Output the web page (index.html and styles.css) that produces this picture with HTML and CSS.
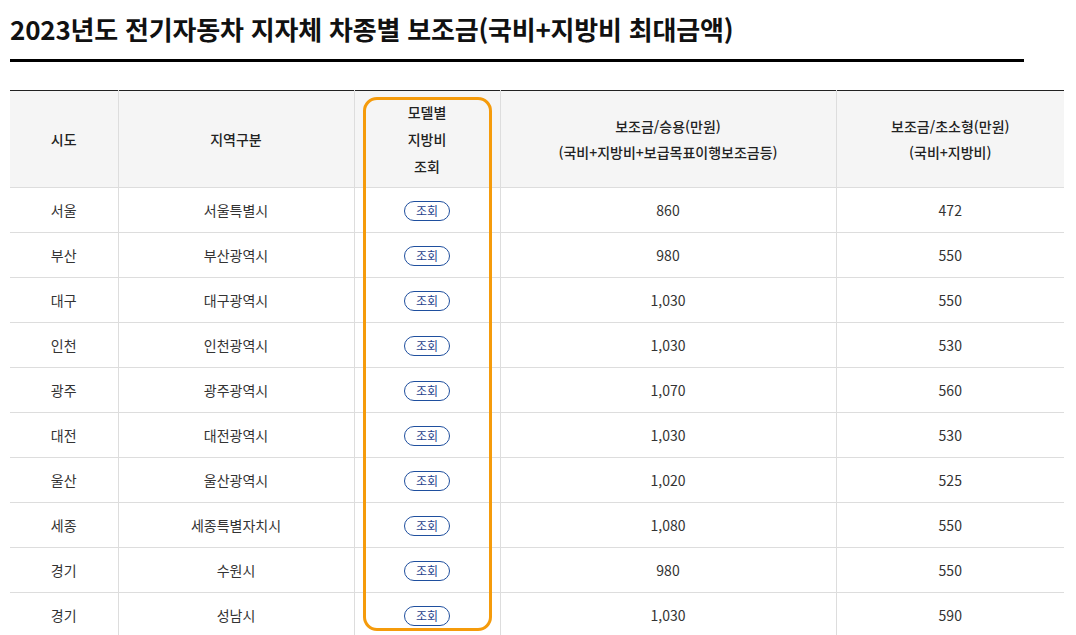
FILE: index.html
```html
<!DOCTYPE html>
<html lang="ko">
<head>
<meta charset="utf-8">
<link rel="stylesheet" href="styles.css">
</head>
<body>
<div class="page">
  <h1 class="title">2023년도 전기자동차 지자체 차종별 보조금(국비+지방비 최대금액)</h1>
  <div class="table-wrap">
    <table class="subsidy">
      <colgroup>
        <col class="c1"><col class="c2"><col class="c3"><col class="c4"><col class="c5">
      </colgroup>
      <thead>
        <tr>
          <th>시도</th>
          <th>지역구분</th>
          <th class="tall">모델별<br>지방비<br>조회</th>
          <th>보조금/승용(만원)<br>(국비+지방비+보급목표이행보조금등)</th>
          <th>보조금/초소형(만원)<br>(국비+지방비)</th>
        </tr>
      </thead>
      <tbody>
        <tr><td>서울</td><td>서울특별시</td><td><span class="btn">조회</span></td><td>860</td><td>472</td></tr>
        <tr><td>부산</td><td>부산광역시</td><td><span class="btn">조회</span></td><td>980</td><td>550</td></tr>
        <tr><td>대구</td><td>대구광역시</td><td><span class="btn">조회</span></td><td>1,030</td><td>550</td></tr>
        <tr><td>인천</td><td>인천광역시</td><td><span class="btn">조회</span></td><td>1,030</td><td>530</td></tr>
        <tr><td>광주</td><td>광주광역시</td><td><span class="btn">조회</span></td><td>1,070</td><td>560</td></tr>
        <tr><td>대전</td><td>대전광역시</td><td><span class="btn">조회</span></td><td>1,030</td><td>530</td></tr>
        <tr><td>울산</td><td>울산광역시</td><td><span class="btn">조회</span></td><td>1,020</td><td>525</td></tr>
        <tr><td>세종</td><td>세종특별자치시</td><td><span class="btn">조회</span></td><td>1,080</td><td>550</td></tr>
        <tr><td>경기</td><td>수원시</td><td><span class="btn">조회</span></td><td>980</td><td>550</td></tr>
        <tr><td>경기</td><td>성남시</td><td><span class="btn">조회</span></td><td>1,030</td><td>590</td></tr>
      </tbody>
    </table>
    <div class="highlight"></div>
  </div>
</div>
</body>
</html>
```

FILE: styles.css
```css
html, body {
  margin: 0;
  padding: 0;
  background: #fff;
}
body {
  font-family: "Noto Sans CJK KR", "Noto Sans", sans-serif;
  color: #333;
  overflow: hidden;
}
.page {
  padding: 0 12px 0 10px;
}
.title {
  margin: 0;
  padding-top: 9px;
  width: 1014px;
  height: 50px;
  font-size: 26px;
  line-height: 40px;
  font-weight: 700;
  color: #111;
  letter-spacing: -0.2px;
  border-bottom: 3px solid #000;
  box-sizing: content-box;
}
.table-wrap {
  position: relative;
  margin-top: 28px;
  width: 1054px;
}
.subsidy {
  width: 1054px;
  border-collapse: collapse;
  table-layout: fixed;
  border-top: 1px solid #222;
  font-size: 14px;
}
.c1 { width: 108px; }
.c2 { width: 236px; }
.c3 { width: 146px; }
.c4 { width: 336px; }
.c5 { width: 228px; }
.subsidy th,
.subsidy td {
  border: 1px solid #ddd;
  text-align: center;
  vertical-align: middle;
  padding: 0;
}
.subsidy th:first-child,
.subsidy td:first-child { border-left: none; }
.subsidy th:last-child,
.subsidy td:last-child { border-right: none; }
.subsidy thead th {
  border-top: none;
  background: #f5f5f5;
  height: 96px;
  font-weight: 500;
  color: #222;
  line-height: 26px;
}
.subsidy thead th.tall {
  line-height: 27px;
}
.subsidy tbody td {
  height: 44px;
  color: #333;
}
.btn {
  display: inline-block;
  width: 44px;
  height: 18px;
  line-height: 17px;
  border: 1px solid #1f4f9e;
  border-radius: 10px;
  font-size: 12px;
  color: #1f3f8c;
  vertical-align: middle;
}
.highlight {
  position: absolute;
  left: 353px;
  top: 7px;
  width: 123px;
  height: 528px;
  border: 3px solid #f59b0b;
  border-radius: 14px;
  pointer-events: none;
}
```
